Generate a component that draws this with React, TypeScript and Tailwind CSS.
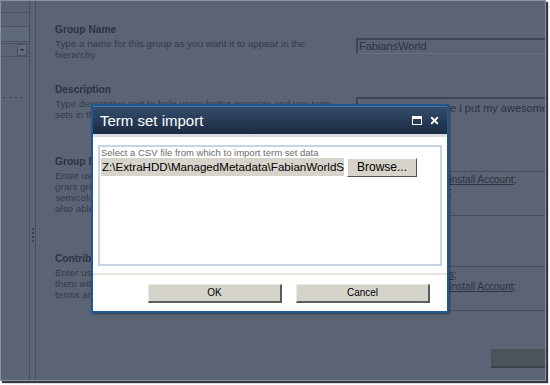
import { X } from "lucide-react";

const lines = (arr: string[]) =>
  arr.map((l) => (
    <div key={l} className="whitespace-nowrap">
      {l}
    </div>
  ));

function Section({ title, text, top }: { title: string; text: string[]; top: string }) {
  return (
    <div className={top}>
      <div className="text-[10.2px] font-bold leading-[12px] text-[#2c3341]">{title}</div>
      <div className="mt-[2px] text-[9.8px] leading-[11px] text-[#343c4a]">{lines(text)}</div>
    </div>
  );
}

// people picker, left part sits under the dialog so only the tail of each entry shows
function Picker({ top, first, second }: { top: string; first: React.ReactNode; second: React.ReactNode }) {
  return (
    <div className={`${top} h-[45px] border-y border-[#454e5d] pt-[2px] pl-[93px] text-[10px] leading-[12px] text-[#2c3341] whitespace-nowrap`}>
      <div>{first}</div>
      <div>{second}</div>
    </div>
  );
}

export default function App() {
  return (
    <div className="w-[550px] h-[385px] bg-white font-['Liberation_Sans',Arial,sans-serif]">
      <div className="relative w-[546px] h-[381px] overflow-hidden border border-[#8a929e] bg-[#5a6474] shadow-[2px_2px_1px_#333a44] flex">
        {/* left nav */}
        <div className="w-[28px] shrink-0 flex flex-col">
          <div className="h-[12px] border-b border-[#4b5463]" />
          <div className="h-[14px] border-b border-[#4b5463]" />
          <div className="h-[15px] bg-[#5f6a7b] border-b border-[#4b5463]" />
          <div className="mt-[1px] h-[14px] flex justify-end pr-[2px] border-y border-[#4b5463]">
            <div className="w-[10px] h-[12px] bg-[#626c7c] border border-[#4a5261] flex items-center justify-center">
              <div className="w-0 h-0 border-x-[2px] border-x-transparent border-t-[2px] border-t-[#222]" />
            </div>
          </div>
          <div className="mt-[40px] ml-[2px] w-[20px] border-t border-dashed border-[#3f4756]" />
        </div>
        {/* splitter */}
        <div className="w-[7px] shrink-0 border-x border-[#465060] flex flex-col items-center">
          <div className="mt-[227px] h-[14px] border-l-2 border-dotted border-[#3a4250]" />
        </div>

        {/* main content */}
        <div className="flex-1 min-w-0 pl-[19px] relative">
          <div className="-mt-[11px] text-[13px] font-bold leading-[14px] text-[#2c3341]">FabiansWorld</div>
          <div className="flex">
            <div className="w-[301px] shrink-0">
              <Section
                top="mt-[20px]"
                title="Group Name"
                text={["Type a name for this group as you want it to appear in the", "hierarchy."]}
              />
              <Section
                top="mt-[24px]"
                title="Description"
                text={["Type descriptive text to help users better organize and use term", "sets in this group."]}
              />
              <Section
                top="mt-[36px]"
                title="Group Managers"
                text={[
                  "Enter user names, group names, or e-mail addresses in order to",
                  "grant group manager permissions. Separate multiple names with",
                  "semicolons. These users will have contributor permissions and",
                  "also able to add users to the contributor role.",
                ]}
              />
              <Section
                top="mt-[39px]"
                title="Contributors"
                text={[
                  "Enter user names, group names, or e-mail addresses. Separate",
                  "them with semicolons. These users will have edit permissions",
                  "terms and term sets in this group.",
                ]}
              />
            </div>
            <div className="flex-1 min-w-0">
              <div className="mt-[34px] h-[16px] border-t-2 border-l-2 border-[#3f4756] border-b border-b-[#66707f] text-[11px] leading-[13px] pl-[1px] text-[#2c3341]">
                FabiansWorld
              </div>
              <div className="mt-[43px] h-[40px] border-t-2 border-l-2 border-[#3f4756] text-[11px] leading-[13px] pl-[1px] pt-[3px] text-[#2c3341] whitespace-nowrap">
                This is the big place i put my awesome terms
              </div>
              <Picker
                top="mt-[34px]"
                first={
                  <span>
                    <span className="underline">Install Account</span>;
                  </span>
                }
                second=";"
              />
              <Picker
                top="mt-[50px]"
                first={
                  <span>
                    <span className="underline">s</span>;
                  </span>
                }
                second={
                  <span>
                    <span className="underline">Install Account</span>;
                  </span>
                }
              />
            </div>
          </div>
          <div className="absolute right-0 top-[348px] w-[54px] h-[19px] bg-[#4d535d] border-b-2 border-[#3a3f48]" />
        </div>

        {/* dialog */}
        <div className="absolute left-[90px] top-[103px] w-[358px] h-[209px] border-2 border-[#1d5896] bg-white flex flex-col shadow-[1px_1px_2px_rgba(0,0,0,0.4)]">
          <div className="h-[28px] bg-gradient-to-b from-[#344d6d] to-[#1b2b42] border-t border-[#5a708e] flex items-center px-[7px]">
            <div className="flex-1 text-white text-[15px] leading-[16px]">Term set import</div>
            <div className="w-[10px] h-[9px] border border-white border-t-[3px] mr-[7px]" />
            <X className="w-[11px] h-[11px] text-white" strokeWidth={4} />
          </div>
          <div className="h-[3px] bg-[#d8dbe0]" />
          <div className="mx-[5px] mt-[8px] h-[121px] border-2 border-[#c5d3e4] px-[1px]">
            <div className="text-[9.5px] leading-[11px] text-[#6b6b6b] whitespace-nowrap">
              Select a CSV file from which to import term set data
            </div>
            <div className="flex items-start gap-[3px]">
              <div className="w-[243px] h-[18px] shrink-0 bg-[#d6d3cb] text-[11.6px] leading-[18px] text-black pl-[1px] whitespace-nowrap overflow-hidden">
                Z:\ExtraHDD\ManagedMetadata\FabianWorldS
              </div>
              <div className="w-[70px] h-[19px] shrink-0 bg-[#d6d3cb] border border-t-white border-l-white border-r-[#555] border-b-[#555] text-[12px] leading-[17px] text-center text-black">
                Browse...
              </div>
            </div>
          </div>
          <div className="mt-[7px] h-[2px] bg-[#e8e6dc]" />
          <div className="mt-[9px] flex gap-[14px] pl-[55px]">
            <div className="w-[134px] h-[19px] bg-[#d6d3cb] border-t border-l border-[#ebe9e3] border-r-2 border-b-2 border-r-[#5c5c5c] border-b-[#5c5c5c] text-[10px] leading-[16px] text-center text-black">
              OK
            </div>
            <div className="w-[134px] h-[19px] bg-[#d6d3cb] border-t border-l border-[#ebe9e3] border-r-2 border-b-2 border-r-[#5c5c5c] border-b-[#5c5c5c] text-[10px] leading-[16px] text-center text-black">
              Cancel
            </div>
          </div>
        </div>
      </div>
    </div>
  );
}
